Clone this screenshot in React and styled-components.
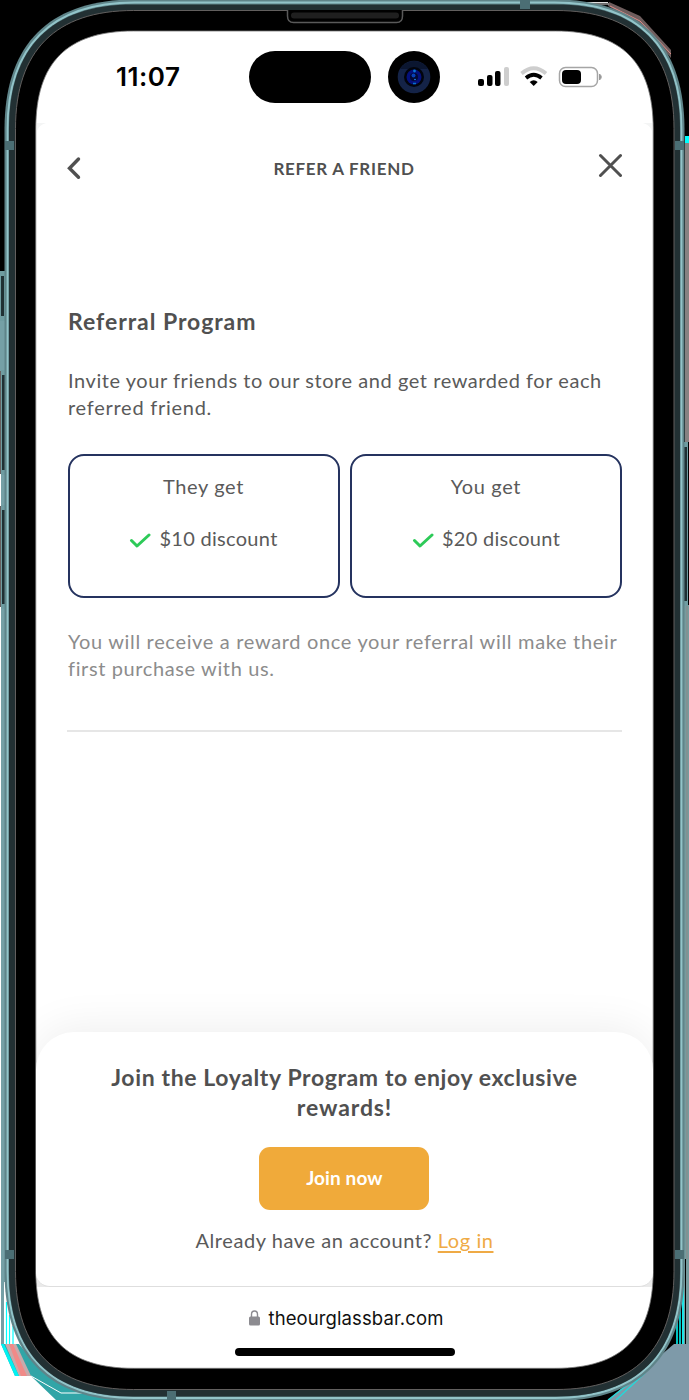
import React from "react";
import styled, { createGlobalStyle } from "styled-components";

const Global = createGlobalStyle`
  *{box-sizing:border-box}
  body{margin:0;background:#000}
`;

const Device = styled.main`
  position: relative;
  width: 689px;
  height: 1400px;
  padding: 31px 36px 32px;
  overflow: hidden;
  font-family: Lato, "Noto Sans", sans-serif;
  color: #505050;
`;
const Artwork = styled.svg`
  position: absolute;
  inset: 0;
  display: block;
`;
const Screen = styled.div`
  position: relative;
  width: 617px;
  height: 1337px;
  display: flex;
  flex-direction: column;
`;
const StatusBar = styled.header`
  height: 92px;
  padding: 20px 49px 0 80px;
  display: flex;
  align-items: flex-start;
  & > * {
    flex-shrink: 0;
  }
`;
const Clock = styled.time`
  width: 133px;
  padding-top: 9px;
  font: 600 26px/34px Inter, sans-serif;
  letter-spacing: 0.5px;
  color: #000;
`;
const Island = styled.div`
  width: 122px;
  height: 52px;
  border-radius: 26px;
  background: #000;
`;
const Camera = styled.svg`
  margin-left: 17px;
`;
const Signals = styled.svg`
  margin: 14px 0 0 37px;
`;
const NavBar = styled.nav`
  height: 90px;
  padding: 0 31px 0 30px;
  display: flex;
  align-items: center;
  justify-content: space-between;
`;
const NavTitle = styled.h1`
  margin: 1px 0 0 9px;
  font-size: 17px;
  line-height: 24px;
  font-weight: 700;
`;
const Track = styled.span`
  letter-spacing: ${(p) => p.$by}px;
  white-space: nowrap;
`;
const Content = styled.section`
  height: 788px;
  padding: 93px 31px 0 32px;
`;
const Heading = styled.h2`
  margin: 0;
  font-size: 23px;
  line-height: 30px;
  font-weight: 700;
`;
const Copy = styled.p`
  margin: ${(p) => p.$top}px 0 0;
  font-size: 20px;
  line-height: 27px;
  color: ${(p) => (p.$muted ? "#8c8c8c" : "#5a5a5a")};
`;
const Rewards = styled.div`
  margin: 33px 0 0 -0.5px;
  display: grid;
  grid-template-columns: 272px 272px;
  gap: 10.5px;
`;
const RewardCard = styled.article`
  height: 144px;
  padding-top: 17px;
  border: 2px solid #25335f;
  border-radius: 16px;
  display: flex;
  flex-direction: column;
  align-items: center;
  gap: 25px;
  font-size: 20px;
  line-height: 27px;
  color: #5a5a5a;
`;
const Reward = styled.div`
  display: flex;
  align-items: center;
  gap: 8px;
`;
const Rule = styled.hr`
  height: 2px;
  margin: 48px 0 0 -1px;
  border: 0;
  background: #e6e6e6;
`;
const JoinPanel = styled.section`
  height: 255px;
  margin-top: 31px;
  padding-top: 30px;
  border-radius: 38px 38px 14px 14px;
  background: #fff;
  box-shadow: 0 -4px 44px rgba(0, 0, 0, 0.07);
  clip-path: inset(-70px 0 0 0);
  border-bottom: 1px solid #dedede;
  text-align: center;
`;
const JoinButton = styled.button`
  display: block;
  width: 170px;
  height: 63px;
  margin: 25px auto 0 223.4px;
  padding: 0 0 2px;
  border: 0;
  border-radius: 11px;
  background: #f0aa3a;
  color: #fff;
  font: 700 19px/24px Lato, sans-serif;
`;
const Login = styled.p`
  margin: 17px 0 0;
  font-size: 20px;
  line-height: 27px;
  color: #5a5a5a;
`;
const LoginLink = styled.a`
  color: #efaa45;
  text-decoration: underline;
  text-underline-offset: 3px;
  text-decoration-thickness: 1.5px;
`;
const BrowserBar = styled.footer`
  height: 81px;
  display: flex;
  flex-direction: column;
  align-items: center;
`;
const Address = styled.div`
  height: 61px;
  padding-left: 3px;
  display: flex;
  align-items: center;
  gap: 9px;
  font: 400 18.5px/24px Inter, sans-serif;
  color: #111;
`;
const HomeBar = styled.div`
  width: 220px;
  height: 8px;
  border-radius: 4px;
  background: #000;
`;

function shell(l, t, r, b, e, k) {
  const c = e * (1 - k);
  return `M${l + e} ${t}H${r - e}C${r - c} ${t} ${r} ${t + c} ${r} ${t + e}V${b - e}C${r} ${b - c} ${r - c} ${b} ${r - e} ${b}H${l + e}C${l + c} ${b} ${l} ${b - c} ${l} ${b - e}V${t + e}C${l} ${t + c} ${l + c} ${t} ${l + e} ${t}Z`;
}

function SideKey({ x, y, h }) {
  return (
    <g>
      <rect x={x} y={y} width="5" height={h} fill="#6f9ca1" />
      <rect x={x + 1} y={y + 5} width="3" height={h - 10} fill="#203034" />
    </g>
  );
}

function PhoneArtwork() {
  return (
    <Artwork width="689" height="1400" viewBox="0 0 689 1400" aria-hidden="true">
      <rect width="689" height="1400" fill="#000" />
      <path d="M0 321h5v50H0zM1 474h4v32H1zM1 607h5v737H1z" fill="#75a0a6" />
      <path d="M0 474h1v32H0zM0 607h1v740H0z" fill="#fff" />
      <path d="M0 371h1v103H0zM0 506h1v101H0z" fill="#665f5f" />
      <path d="M4 1282h4l12 62H4z" fill="#fff" />
      <path d="M6.500 1302v42M9.500 1315v29M13 1326v18" stroke="#0ff" strokeWidth="1.200" />
      <path d="M0 1344h30l90 56H0z" fill="#fff" />
      <path d="M1 1344h18l20 24 81 32H56L31 1376 15 1376z" fill="#31a5a7" />
      <path d="M5 1344h11l15 32H19z" fill="#c9a9ab" />
      <path d="M9 1344h4l14 32h-6z" fill="#f08a88" />
      <path d="M1 1344h3l15 32h-4z" fill="#00f2f2" />
      <path d="M31 1376l30 17h30" fill="none" stroke="#fff" strokeWidth="1" />
      <path d="M685 136h4v7h-4z" fill="#0ff" />
      <path d="M685 143h4v299h-4z" fill="#868282" />
      <path d="M682 605h7v739h-7z" fill="#769b9e" />
      <path d="M687 605v654" stroke="#8b8988" />
      <path d="M685 1259h1v85h-1z" fill="#000" />
      <path d="M689 1344v56H608l66-56z" fill="#7e9aa9" />
      <path d="M677 1344v-26M680 1344v-45M683 1344v-66" stroke="#0ff" strokeWidth="1.500" />
      <path d="M608 1400l37-29M616 1400l29-27" stroke="#27d7d8" strokeWidth="1.500" />
      <path d="M609 2l31 14 31 34v8l-31-34-32-18z" fill="#6e5d5d" />
      <path d="M576 2.500h32M580 4h29" stroke="#ddd" strokeWidth="1" />
      <path d="M610 6l30 15 31 33" fill="none" stroke="#dd8c88" strokeWidth="1" />
      <SideKey x={0} y={271} h={50} />
      <SideKey x={1} y={370} h={105} />
      <SideKey x={1} y={505} h={104} />
      <SideKey x={683} y={442} h={164} />
      <path d={shell(4.5, -0.5, 684.5, 1401, 130, 0.656)} fill="#5f8489" />
      <path d={shell(7.5, 2.5, 681.5, 1398, 127, 0.656)} fill="none" stroke="#92c4c9" strokeWidth="1.8" />
      <path d={shell(9, 4.5, 680, 1396.5, 124, 0.656)} fill="#223033" />
      <path d="M5 141h9v9H5zM675 141h9v9h-9zM5 1250h9v9H5zM675 1250h9v9h-9zM520 0h10v9h-10zM167 1391h9v9h-9z" fill="#4b6e74" />
      <path d={shell(15.5, 10.5, 674, 1389.5, 118, 0.66)} fill="#000" stroke="#625f5e" />
      <path d="M287.500 10v6q0 6.500 6 6.500h103q6 0 6-6.500v-6" fill="#000" stroke="#595959" strokeWidth="1.500" />
      <rect x="291" y="12.500" width="108" height="6" rx="3" fill="#1f1f1f" />
      <path d={shell(35.8, 31, 653.2, 1368.3, 98, 0.68)} fill="#fff" stroke="#777" strokeWidth="0.800" />
      <path d="M37 1274q2 11 12 13H37zM652 1274q-2 11-12 13h12z" fill="#eee" />
      <path d="M37 123h9q-7 2-9 8zM652 123h-9q7 2 9 8z" fill="#f4f5f5" />
    </Artwork>
  );
}

const Check = () => (
  <svg width="22" height="18" viewBox="0 0 22 18" fill="none" stroke="#2dca58" strokeWidth="3" strokeLinecap="round" strokeLinejoin="round">
    <path d="M2.500 10.500l5.500 5.500L20 5" />
  </svg>
);

const rewards = [
  { who: "They get", value: "$10 discount" },
  { who: "You get", value: "$20 discount" },
];

export default function App() {
  return (
    <Device>
      <Global />
      <PhoneArtwork />
      <Screen>
        <StatusBar>
          <Clock>11:07</Clock>
          <Island />
          <Camera width="52" height="52" viewBox="0 0 52 52">
            <circle cx="26" cy="26" r="26" />
            <circle cx="26" cy="26" r="16.300" fill="#142347" />
            <path d="M12 18a16.300 16.300 0 0 1 28 0z" fill="#0b1630" />
            <circle cx="26" cy="26" r="10" fill="#02040c" />
            <circle cx="26" cy="26" r="7.500" fill="#04107a" />
            <circle cx="26" cy="26" r="4" fill="#020933" />
            <circle cx="25.500" cy="24.500" r="2" fill="#0740b8" />
            <circle cx="26.500" cy="20" r="1.400" fill="#0878d5" />
            <path d="M25 32.500h3" stroke="#0771cc" strokeWidth="1.500" />
            <circle cx="27" cy="28.500" r=".8" fill="#2492ff" />
          </Camera>
          <Signals width="127" height="24" viewBox="0 0 127 24">
            <g>
              <rect x="1" y="14" width="6" height="7" rx="2" />
              <rect x="10" y="10" width="5.500" height="11" rx="2" />
              <rect x="18" y="6" width="5.500" height="15" rx="2" />
              <rect x="27" y="2" width="5" height="19" rx="2" fill="#cecece" />
            </g>
            <g fill="none" strokeLinecap="butt">
              <path d="M44.500 8.500Q56.700-2 69 8.500" stroke="#cecece" strokeWidth="3.800" />
              <path d="M49 13Q56.700 6.500 64.500 13" stroke="#000" strokeWidth="3.700" />
            </g>
            <path d="M52.700 17q4-3.300 8 0L56.700 21z" />
            <rect x="82.500" y="2.500" width="38" height="19" rx="6" fill="#fff" stroke="#a5a5a5" strokeWidth="1.500" />
            <rect x="85" y="5" width="19" height="14" rx="4" />
            <path d="M122.500 9q3.500 3 0 6z" fill="#999" stroke="#999" />
          </Signals>
        </StatusBar>
        <NavBar>
          <svg width="15" height="24" viewBox="0 0 15 24" fill="none" stroke="#505050" strokeWidth="3.400" strokeLinecap="round" strokeLinejoin="miter">
            <path d="M12.500 3L3.500 12.300l9 9" />
          </svg>
          <NavTitle><Track $by={0.7}>REFER A FRIEND</Track></NavTitle>
          <svg width="24" height="30" viewBox="0 0 24 30" fill="none" stroke="#505050" strokeWidth="3" strokeLinecap="round">
            <path d="M2.500 2.500l20 20M22.500 2.500L2.500 22.500" />
          </svg>
        </NavBar>
        <Content>
          <Heading><Track $by={0.95}>Referral Program</Track></Heading>
          <Copy $top={31}>
            <Track $by={0.56}>Invite your friends to our store and get rewarded for each</Track><br />
            <Track $by={0.73}>referred friend.</Track>
          </Copy>
          <Rewards>
            {rewards.map((r) => (
              <RewardCard key={r.who}>
                <Track $by={0.65}>{r.who}</Track>
                <Reward><Check /><Track $by={0.3}>{r.value}</Track></Reward>
              </RewardCard>
            ))}
          </Rewards>
          <Copy $top={30} $muted>
            <Track $by={0.67}>You will receive a reward once your referral will make their</Track><br />
            <Track $by={0.62}>first purchase with us.</Track>
          </Copy>
          <Rule />
        </Content>
        <JoinPanel>
          <Heading>
            <Track $by={0.62}>Join the Loyalty Program to enjoy exclusive</Track><br />
            <Track $by={0.9}>rewards!</Track>
          </Heading>
          <JoinButton><Track $by={0.1}>Join now</Track></JoinButton>
          <Login><Track $by={0.57}>Already have an account? <LoginLink>Log in</LoginLink></Track></Login>
        </JoinPanel>
        <BrowserBar>
          <Address>
            <svg width="11" height="16" viewBox="0 0 11 16">
              <rect y="6.500" width="11" height="9" rx="1.500" fill="#8c8b90" />
              <path d="M2.500 7V4.500a3 3.500 0 0 1 6 0V7" fill="none" stroke="#8c8b90" strokeWidth="1.400" />
            </svg>
            <Track $by={0.1}>theourglassbar.com</Track>
          </Address>
          <HomeBar />
        </BrowserBar>
      </Screen>
    </Device>
  );
}
